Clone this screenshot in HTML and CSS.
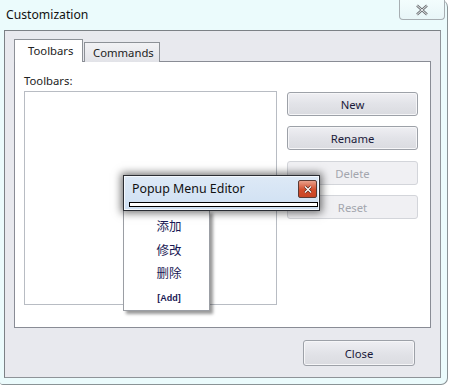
FILE: index.html
```html
<!DOCTYPE html>
<html>
<head>
<meta charset="utf-8">
<link rel="stylesheet" href="styles.css">
</head>
<body>
<div class="window">
  <div class="titlebar">
    <span class="title">Customization</span>
    <div class="winclose">
      <svg width="14" height="12" viewBox="0 0 14 12"><path d="M2 1.5 L12 10.5 M12 1.5 L2 10.5" stroke="#6d7175" stroke-width="2.4" fill="none"/><path d="M2 1.5 L12 10.5 M12 1.5 L2 10.5" stroke="#f4f6f7" stroke-width="0.9" fill="none"/></svg>
    </div>
  </div>
  <div class="client">
    <div class="tabs">
      <div class="tab active">Toolbars</div>
      <div class="tab">Commands</div>
    </div>
    <div class="panel">
      <div class="label">Toolbars:</div>
      <div class="panel-body">
        <div class="listbox"></div>
        <div class="btncol">
          <div class="btn">New</div>
          <div class="btn">Rename</div>
          <div class="btn disabled">Delete</div>
          <div class="btn disabled">Reset</div>
        </div>
      </div>
    </div>
    <div class="footer">
      <div class="btn close">Close</div>
    </div>
  </div>
</div>

<div class="popup">
  <div class="popup-head">
    <span class="popup-title">Popup Menu Editor</span>
    <div class="redclose">
      <svg width="10" height="9" viewBox="0 0 10 9"><path d="M2 1.5 L8 7.5 M8 1.5 L2 7.5" stroke="#5a2a20" stroke-width="2.6" fill="none"/><path d="M2 1.5 L8 7.5 M8 1.5 L2 7.5" stroke="#ffffff" stroke-width="1.3" fill="none"/></svg>
    </div>
  </div>
  <div class="popup-bar"></div>
</div>
<div class="menu">
  <div class="item">添加</div>
  <div class="item">修改</div>
  <div class="item">删除</div>
  <div class="item add">[Add]</div>
</div>
</body>
</html>
```
FILE: styles.css
```css
* { box-sizing: border-box; }
html, body {
  margin: 0;
  padding: 0;
  width: 450px;
  height: 386px;
  background: #ffffff;
  overflow: hidden;
  font-family: "Noto Sans", "Open Sans", "Noto Sans CJK SC", sans-serif;
  font-size: 11.3px;
  color: #1e1e1e;
}
.window {
  width: 448px;
  height: 385px;
  background: #ebfbfc;
  border-right: 1px solid #8a9396;
  border-bottom: 1px solid #8a9396;
  border-radius: 0 7px 7px 3px;
  display: flex;
  flex-direction: column;
  padding: 0 6px 6px 4px;
}
.titlebar {
  height: 30px;
  display: flex;
  align-items: flex-start;
  justify-content: space-between;
}
.title {
  margin: 6px 0 0 2px;
  font-size: 12.2px;
  color: #111;
}
.winclose {
  width: 46px;
  height: 20px;
  margin-right: -4px;
  border: 1px solid #a7aeb2;
  border-top: none;
  border-radius: 0 0 4px 4px;
  background: linear-gradient(#f3fdfd, #e8f6f8);
  display: flex;
  align-items: center;
  justify-content: center;
}
.client {
  flex: 1;
  background: #e8e9ee;
  border: 1px solid #7c8186;
  border-right-color: #8e9398;
  border-bottom-color: #8e9398;
  padding: 8px 10px 0 9px;
  display: flex;
  flex-direction: column;
}
.tabs {
  display: flex;
  align-items: flex-end;
  height: 23px;
  position: relative;
  z-index: 1;
  margin-bottom: -1px;
}
.tab {
  height: 20px;
  padding: 0 8px 0 8px;
  border: 1px solid #8d9197;
  border-bottom: none;
  background: linear-gradient(#f2f2f5, #e2e3e8);
  line-height: 19px;
  color: #222;
}
.tab.active {
  height: 23px;
  width: 69px;
  background: #ffffff;
  padding: 0 0 0 13px;
  line-height: 21px;
}
.tab + .tab { margin-left: 1px; width: 76px; }
.panel {
  width: 417px;
  height: 267px;
  background: #ffffff;
  border: 1px solid #898c95;
  padding: 11px 10px 0 9px;
  display: flex;
  flex-direction: column;
}
.label {
  height: 18px;
  line-height: 16px;
  color: #222;
}
.panel-body {
  display: flex;
  gap: 10px;
  align-items: flex-start;
}
.listbox {
  width: 253px;
  height: 214px;
  border: 1px solid #b8bcc3;
  background: #fff;
}
.btncol {
  display: flex;
  flex-direction: column;
  gap: 10px;
  padding-top: 1px;
}
.btn {
  width: 131px;
  height: 24px;
  border: 1px solid #9da1a8;
  border-radius: 3px;
  background: linear-gradient(#efeff3, #e2e3e8 50%, #dadbe0);
  box-shadow: inset 0 0 0 1px #f6f6f8;
  text-align: center;
  line-height: 23px;
  color: #1a1a3a;
}
.btn.disabled {
  border-color: #d3d5da;
  background: #f0f0f3;
  box-shadow: none;
  color: #a3a6ae;
}
.btncol .btn:nth-child(3) { margin-top: 1px; }
.footer {
  display: flex;
  justify-content: flex-end;
  padding: 12px 15px 0 0;
}
.btn.close {
  width: 112px;
  height: 26px;
  line-height: 25px;
}
.popup {
  position: absolute;
  left: 123px;
  top: 175px;
  width: 197px;
  height: 36px;
  border: 1px solid #2a2d33;
  background: linear-gradient(#dde9f6, #cfe0f3);
  box-shadow: inset 0 0 0 1px #f4f8fd, 0 0 8px 2px rgba(0,0,0,0.55);
  padding: 4px 2px 0 5px;
  z-index: 5;
}
.popup-head {
  display: flex;
  justify-content: space-between;
  align-items: flex-start;
  height: 22px;
}
.popup-title {
  font-size: 12.4px;
  color: #111;
  margin-left: 3px;
  margin-top: 0px;
}
.redclose {
  width: 19px;
  height: 18px;
  border: 1px solid #5b3a34;
  border-radius: 2px;
  background: linear-gradient(#e8a08b, #d24c2c 55%, #c84526);
  display: flex;
  align-items: center;
  justify-content: center;
}
.popup-bar {
  width: 189px;
  height: 5px;
  border: 1px solid #000;
  background: #fff;
}
.menu {
  position: absolute;
  left: 123px;
  top: 210px;
  width: 87px;
  height: 101px;
  background: #fff;
  border: 1px solid #9b9ea4;
  box-shadow: 3px 3px 3px rgba(0,0,0,0.4);
  padding: 6px 0 0 5px;
  z-index: 4;
}
.item {
  height: 23.5px;
  line-height: 20px;
  text-align: center;
  font-size: 12.5px;
  color: #1a1a55;
}
.item.add {
  font-size: 9px;
  font-weight: bold;
  line-height: 20px;
  font-family: "Liberation Sans", sans-serif;
}
```
